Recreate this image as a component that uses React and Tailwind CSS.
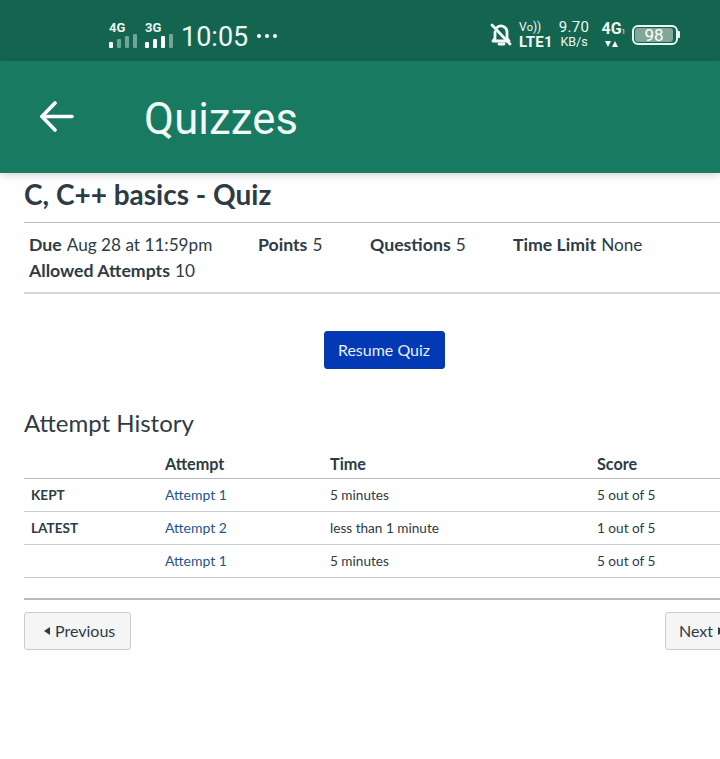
import React from "react";

function Bars({ on }) {
  const hs = ["h-[6px]", "h-[9px]", "h-[12px]", "h-[14px]"];
  return (
    <div className="flex items-end gap-[4px]">
      {hs.map((h, i) => (
        <div key={i} className={`w-[4px] rounded-[1px] ${h} ${i < on ? "bg-white" : "bg-[#6fa696]"}`} />
      ))}
    </div>
  );
}

function Net({ label, on }) {
  return (
    <div className="flex flex-col w-[28px] h-[26px] justify-between">
      <div className="text-[13px] leading-[12px] font-bold text-[#eaf5f1] font-['Roboto',sans-serif]">{label}</div>
      <Bars on={on} />
    </div>
  );
}

const rows = [
  ["KEPT", "Attempt 1", "5 minutes", "5 out of 5"],
  ["LATEST", "Attempt 2", "less than 1 minute", "1 out of 5"],
  ["", "Attempt 1", "5 minutes", "5 out of 5"],
];

function Meta({ label, value, className }) {
  return (
    <span className={className}>
      <b className="text-[17.7px]">{label}</b>
      <span className="ml-[5px] text-[17.2px]">{value}</span>
    </span>
  );
}

export default function App() {
  return (
    <div className="w-[720px] h-[759px] overflow-hidden bg-white text-[#2d3b45] font-['Lato',sans-serif]">
      <div className="h-[61px] bg-[#14654f] flex items-center pt-[8px] pl-[109px] pr-[40px] text-[#eef7f4] font-['Roboto',sans-serif]">
        <Net label="4G" on={1} />
        <div className="w-[8px]" />
        <Net label="3G" on={3} />
        <div className="ml-[8px] text-[27px] leading-[34px] font-normal mt-[4px]">10:05</div>
        <div className="ml-[9px] flex gap-[4px] mt-[3px]">
          <div className="w-[4px] h-[4px] rounded-full bg-white" />
          <div className="w-[4px] h-[4px] rounded-full bg-white" />
          <div className="w-[4px] h-[4px] rounded-full bg-white" />
        </div>
        <div className="ml-auto flex items-center">
          <svg width="22" height="24" viewBox="0 0 22 24" fill="none" stroke="#f2f9f6" strokeWidth="2.8" strokeLinecap="round" strokeLinejoin="round">
            <path d="M7 4.5a6 6 0 0 1 10 4.5v6l2 3H6" />
            <path d="M5 9v6l-2 3h3" />
            <path d="M9 21h5" />
            <path d="M2 2l18 19" />
          </svg>
          <div className="ml-[7px] flex flex-col w-[36px] text-[#f2f9f6]">
            <div className="text-[12px] leading-[14px] font-normal">V<span className="text-[11px]">o</span>))</div>
            <div className="text-[15px] leading-[15px] font-bold tracking-[0.3px] whitespace-nowrap">LTE1</div>
          </div>
          <div className="ml-[3px] flex flex-col items-center w-[32px]">
            <div className="text-[15px] leading-[15px] whitespace-nowrap tracking-[0.3px]">9.70</div>
            <div className="text-[12.5px] leading-[14px] whitespace-nowrap">KB/s</div>
          </div>
          <div className="ml-[11px] flex flex-col items-center w-[25px]">
            <div className="text-[16px] leading-[15px] font-bold whitespace-nowrap">4G<span className="text-[7px] font-normal">1</span></div>
            <svg width="13" height="7" viewBox="0 0 13 7" fill="#f2f9f6" className="mr-[4px] mt-[1px]">
              <path d="M0 0h6L3 6z" />
              <path d="M10 0l3 6H7z" />
            </svg>
          </div>
          <div className="ml-[6px] flex items-center">
            <div className="w-[46px] h-[20px] rounded-[6px] border-2 border-[#eef7f4] p-[1px] flex">
              <div className="w-[38px] h-[14px] rounded-[3px] bg-[#7fa89b] text-[17px] leading-[14px] text-center text-white">98</div>
            </div>
            <div className="w-[2px] h-[7px] bg-[#eef7f4] rounded-r-[1px]" />
          </div>
        </div>
      </div>

      <div className="relative z-10 h-[112px] bg-[#197a62] flex items-center shadow-[0_2px_8px_rgba(0,0,0,0.18)]">
        <svg className="ml-[39px]" width="35" height="32" viewBox="0 0 35 32" fill="none" stroke="white" strokeWidth="3.6" strokeLinecap="round" strokeLinejoin="round">
          <path d="M33 15.5H3" />
          <path d="M16 2 L3 15.5 L16 29" />
        </svg>
        <div className="ml-[70px] mt-[6px] text-[43.5px] leading-[50px] text-[#f2faf7] font-['Roboto',sans-serif] tracking-[0.2px]">Quizzes</div>
      </div>

      <div className="pl-[24px] w-[760px]">
        <h1 className="text-[28px] leading-[42px] font-bold h-[50px] border-b border-[#b8bcbe]">C, C++ basics - Quiz</h1>
        <div className="h-[71px] border-b-2 border-[#d5d7d8] pl-[5px] pt-[9px] leading-[26px]">
          <div className="flex">
            <Meta className="w-[229px]" label="Due" value="Aug 28 at 11:59pm" />
            <Meta className="w-[112px]" label="Points" value="5" />
            <Meta className="w-[143px]" label="Questions" value="5" />
            <Meta label="Time Limit" value="None" />
          </div>
          <Meta label="Allowed Attempts" value="10" />
        </div>
        <div className="w-[720px] pr-[24px] flex justify-center pt-[37px]">
          <button className="ml-[24px] w-[121px] h-[38px] rounded-[3px] bg-[#0439b5] border border-[#0a3aa0] text-[#e8f0ff] text-[16px]">Resume Quiz</button>
        </div>
        <h2 className="mt-[38px] text-[24px] leading-[32px] font-normal">Attempt History</h2>

        <div className="mt-[9px]">
          <div className="flex h-[31px] items-center pt-[2px] font-bold text-[16.2px] border-b border-[#b8bcbe]">
            <div className="w-[134px]" />
            <div className="w-[165px] pl-[7px]">Attempt</div>
            <div className="w-[267px] pl-[7px]">Time</div>
            <div className="pl-[7px]">Score</div>
          </div>
          {rows.map((r, i) => (
            <div key={i} className="flex h-[33px] items-center border-b border-[#c7cdd1] text-[13.6px]">
              <div className="w-[134px] pl-[7px] font-bold">{r[0]}</div>
              <div className="w-[165px] pl-[7px] mb-[2px] text-[14px] text-[#1f5590]">{r[1]}</div>
              <div className="w-[267px] pl-[7px]">{r[2]}</div>
              <div className="pl-[7px]">{r[3]}</div>
            </div>
          ))}
        </div>

        <div className="mt-[20px] border-t-2 border-[#b9bcbd] pt-[12px] flex justify-between h-[52px] w-[696px] relative">
          <button className="w-[107px] h-[38px] rounded-[3px] bg-[#f5f5f5] border border-[#c7cdd1] text-[16px] flex items-center pl-[19px] text-[#2d3b45]">
            <svg width="6" height="8" viewBox="0 0 6 8" fill="#2d3b45" className="mr-[5px]"><path d="M6 0v8L0 4z" /></svg>
            Previous
          </button>
          <button className="absolute left-[641px] top-[12px] w-[80px] h-[38px] rounded-[3px] bg-[#f5f5f5] border border-[#c7cdd1] text-[16px] flex items-center pl-[13px] text-[#2d3b45]">
            Next
            <svg width="6" height="8" viewBox="0 0 6 8" fill="#2d3b45" className="ml-[5px]"><path d="M0 0v8l6-4z" /></svg>
          </button>
        </div>
      </div>
    </div>
  );
}
